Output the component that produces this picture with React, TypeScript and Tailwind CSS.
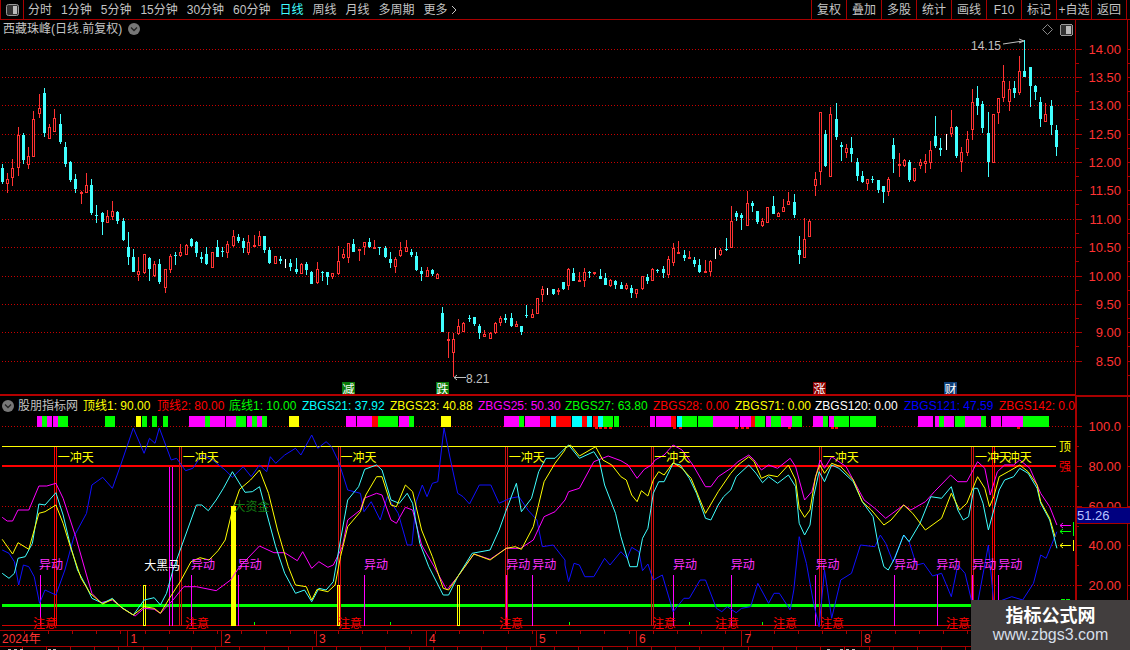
import React from 'react';

const RED = '#ff3232';
const LINE = '#a80000';
const GRID = '#c80000';
const CYAN = '#40ffff';

// hi, body top, body bottom, lo, kind (page pixels)
type Candle = [number, number, number, number, 'r' | 'c' | 'w'];
const candles: Candle[] = [
  [164,168,182,184,'c'],[173,179,184,193,'r'],[159,168,178,186,'r'],[127,135,168,176,'r'],[133,135,160,164,'c'],[147,156,165,169,'r'],
  [111,119,157,157,'r'],[94,108,114,118,'r'],[88,93,133,137,'c'],[124,127,139,139,'r'],[109,118,132,132,'r'],[114,124,142,144,'c'],
  [142,147,164,167,'c'],[161,162,180,182,'c'],[174,179,189,193,'c'],[191,192,193,204,'r'],[173,185,193,193,'r'],[179,185,213,215,'c'],
  [205,215,216,223,'c'],[212,213,222,235,'c'],[210,216,223,223,'r'],[201,211,217,220,'r'],[211,212,221,224,'c'],[218,221,240,241,'c'],
  [232,247,257,265,'c'],[249,257,272,272,'c'],[257,271,275,281,'r'],[254,254,273,274,'r'],[257,258,269,281,'c'],[261,264,276,277,'r'],
  [259,264,282,284,'c'],[269,269,288,293,'r'],[254,256,270,273,'r'],[252,255,256,265,'c'],[244,252,256,257,'r'],[244,245,255,255,'r'],
  [238,239,246,247,'c'],[241,242,253,257,'c'],[252,257,259,263,'c'],[247,254,264,265,'c'],[252,252,268,268,'r'],[240,247,257,257,'c'],
  [247,251,252,257,'c'],[241,244,253,258,'r'],[230,236,246,247,'r'],[234,237,241,243,'c'],[238,241,248,253,'c'],[235,242,253,255,'r'],
  [235,245,247,247,'r'],[231,236,246,246,'r'],[236,236,250,253,'c'],[247,250,263,264,'c'],[256,256,264,264,'r'],[256,259,261,264,'c'],
  [259,261,261,268,'w'],[259,263,267,271,'c'],[258,269,272,274,'c'],[263,264,274,274,'r'],[262,264,270,275,'c'],[271,272,284,284,'c'],
  [262,269,283,284,'r'],[271,272,273,281,'c'],[272,272,277,285,'c'],[273,273,277,279,'r'],[246,261,274,275,'r'],[249,254,258,259,'r'],
  [243,243,258,263,'r'],[239,244,252,252,'c'],[249,249,250,261,'r'],[242,242,247,255,'r'],[238,242,247,248,'c'],[240,247,248,248,'r'],
  [247,247,248,255,'c'],[246,248,257,258,'c'],[252,259,263,268,'c'],[257,259,267,273,'r'],[242,250,256,257,'r'],[240,247,252,252,'r'],
  [249,252,255,257,'c'],[252,256,270,271,'c'],[267,271,274,281,'c'],[267,270,277,277,'r'],[269,270,274,276,'c'],[273,274,279,279,'r'],
  [307,313,332,332,'c'],[332,339,341,358,'r'],[333,339,353,377,'r'],[319,326,334,335,'r'],[322,323,332,332,'r'],[315,318,319,322,'c'],
  [317,317,324,326,'c'],[324,326,333,339,'c'],[330,334,337,337,'r'],[332,333,339,339,'r'],[322,323,333,334,'r'],[316,318,323,326,'r'],
  [314,318,320,323,'c'],[313,318,326,327,'c'],[321,324,327,327,'r'],[326,326,332,335,'c'],[305,315,316,318,'c'],[309,314,318,318,'r'],
  [298,298,314,314,'r'],[286,289,295,302,'r'],[288,291,291,295,'w'],[289,289,294,295,'c'],[288,290,291,295,'r'],[282,282,289,290,'c'],
  [268,269,286,290,'r'],[268,273,281,281,'c'],[272,280,282,282,'r'],[268,272,281,287,'r'],[271,272,273,278,'c'],[272,272,273,275,'r'],
  [269,276,279,279,'c'],[273,278,285,285,'c'],[279,280,286,287,'r'],[280,281,285,289,'c'],[282,285,289,289,'c'],[283,285,289,290,'r'],
  [285,288,293,298,'c'],[289,289,294,298,'r'],[276,276,289,290,'r'],[274,277,281,284,'c'],[268,269,281,281,'r'],[269,270,271,273,'c'],
  [266,269,273,278,'c'],[256,259,275,278,'r'],[243,248,263,266,'r'],[241,252,253,253,'r'],[250,255,258,261,'c'],[251,257,258,258,'r'],
  [257,260,264,267,'c'],[259,265,272,273,'c'],[260,271,273,273,'r'],[260,261,272,276,'r'],[248,250,250,259,'w'],[248,250,255,256,'r'],
  [238,249,250,251,'c'],[206,221,248,248,'r'],[211,213,217,221,'c'],[213,215,218,230,'c'],[191,203,226,226,'r'],[201,203,206,212,'c'],
  [211,211,222,224,'c'],[218,221,226,227,'r'],[207,207,223,223,'r'],[196,206,214,214,'c'],[212,213,217,217,'r'],[199,207,212,212,'r'],
  [192,201,205,205,'r'],[194,202,215,218,'c'],[236,250,255,264,'c'],[218,239,258,258,'r'],[219,221,237,237,'r'],[172,179,186,196,'r'],
  [112,112,172,185,'r'],[130,134,166,167,'c'],[107,114,177,177,'r'],[103,119,137,140,'c'],[142,145,147,161,'c'],[144,148,153,158,'r'],
  [137,148,154,162,'c'],[158,162,176,181,'c'],[171,176,182,183,'c'],[179,179,184,190,'r'],[176,179,180,183,'c'],[180,180,190,193,'c'],
  [186,186,192,203,'c'],[177,179,192,196,'r'],[138,145,159,173,'c'],[153,164,166,177,'r'],[159,160,166,167,'r'],[160,162,180,182,'c'],
  [168,168,181,182,'r'],[159,162,166,169,'r'],[154,161,164,173,'r'],[141,150,163,169,'r'],[116,136,146,148,'c'],[138,148,150,156,'c'],
  [134,143,143,150,'w'],[110,127,134,137,'r'],[126,127,156,158,'c'],[147,152,162,172,'r'],[131,139,153,156,'r'],[89,102,130,140,'r'],
  [86,98,106,115,'c'],[101,104,128,133,'c'],[112,133,162,177,'c'],[114,114,163,163,'r'],[98,98,113,124,'r'],[65,81,98,102,'r'],
  [81,89,102,111,'r'],[81,88,93,98,'c'],[56,71,93,95,'r'],[40,71,77,77,'c'],[67,67,86,107,'c'],[85,86,92,100,'c'],
  [97,102,119,127,'c'],[103,114,122,122,'r'],[100,106,125,135,'c'],[125,130,147,156,'c'],
];

const blue = [
  6,360,25,370,40,395,52,465,65,405,80,410,95,440,110,520,125,480,155,495,180,420,205,320,240,250,255,165,285,142,312,175,335,105,370,-6,400,70,415,25,430,40,442,-6,475,90,490,85,515,122,535,115,560,75,590,90,625,120,645,142,675,110,697,140,720,105,740,125,750,80,765,100,790,75,820,55,835,75,865,15,882,55,905,35,920,50,940,95,965,180,1000,190,1010,245,1030,215,1055,270,1075,200,1105,250,1130,345,1143,345,1155,215,1172,165,1185,200,1200,160,1215,155,1232,-6,1250,90,1270,190,1285,200,1303,222,1330,165,1362,165,1385,220,1415,205,1440,200,1465,240,1490,270,1505,350,1535,345,1568,390,
];
const blueR = [
  0,405,10,455,25,400,40,405,55,440,80,440,110,385,125,405,155,365,172,385,185,352,205,365,215,422,230,402,245,450,270,435,300,545,330,505,345,505,375,450,390,450,420,535,435,545,450,530,475,548,490,535,515,530,535,460,565,520,580,490,595,490,625,540,635,480,650,320,670,400,690,520,705,590,720,420,740,565,765,450,795,430,820,345,860,350,875,315,890,340,910,395,940,315,955,335,975,405,995,400,1020,438,1045,430,1072,500,1090,405,1110,430,1130,520,1145,520,1175,345,1190,520,1240,500,1270,510,1300,460,1320,375,1335,385,1365,305,
];
const cyan = [
  6,430,25,445,40,430,50,385,70,380,90,340,108,222,125,225,155,188,175,255,195,345,215,420,240,470,255,505,285,520,312,505,335,530,370,555,400,510,428,503,445,525,462,490,480,420,510,330,545,225,560,225,578,242,600,210,620,175,645,125,680,187,700,185,720,170,745,270,765,350,790,430,820,490,845,480,865,515,885,475,905,480,925,455,945,330,965,210,995,170,1012,118,1045,105,1060,120,1085,210,1108,220,1130,190,1145,220,1165,340,1190,410,1230,495,1245,495,1270,440,1310,370,1360,360,1385,300,1405,240,1433,160,1447,245,1475,205,1495,125,1515,85,1540,85,1568,55,
];
const cyanR = [
  0,55,10,45,40,85,80,65,95,90,110,165,140,250,155,320,180,410,200,410,215,325,230,295,245,190,260,155,275,155,300,100,320,105,345,145,365,190,390,265,405,270,425,225,440,200,460,180,475,140,510,105,530,130,548,158,565,140,590,160,620,135,640,170,650,280,665,315,680,285,690,200,705,125,720,155,740,105,760,115,800,155,825,215,855,260,870,350,885,410,897,420,915,385,940,315,955,335,985,280,1015,200,1045,205,1072,170,1090,240,1105,270,1120,260,1135,175,1145,175,1160,220,1175,300,1190,240,1205,180,1220,150,1245,140,1262,115,1285,130,1310,175,1320,220,1345,270,1365,355,
];
const yellow = [
  6,328,35,372,50,338,80,358,108,250,125,245,155,225,175,280,195,350,225,445,250,490,285,522,312,508,340,535,370,555,400,530,428,535,445,550,470,505,500,455,530,395,555,383,580,390,605,362,625,330,645,240,665,178,695,150,720,120,745,190,770,300,800,410,820,465,850,470,865,510,880,478,910,485,930,465,945,380,965,290,1000,245,1015,195,1045,140,1060,140,1085,225,1100,230,1125,165,1145,185,1170,300,1200,380,1230,475,1245,480,1270,440,1315,372,1360,390,1405,355,1430,350,1447,358,1480,290,1510,155,1540,100,1568,60,
];
const yellowR = [
  0,55,15,45,40,78,85,50,105,90,130,105,155,140,170,150,185,195,200,215,212,182,230,198,245,150,260,125,275,135,300,98,325,115,350,145,390,250,425,185,460,130,480,105,510,80,525,95,545,145,565,135,590,140,620,105,640,150,650,235,665,262,680,240,695,140,707,105,720,130,740,100,765,110,800,150,825,215,850,240,885,285,905,270,940,225,965,250,1000,300,1045,265,1072,190,1095,240,1115,220,1145,140,1165,175,1178,230,1190,200,1205,140,1230,125,1262,105,1285,125,1310,165,1320,215,1345,265,1360,320,
];
const magenta = [
  6,262,20,273,35,273,50,240,80,240,108,168,130,168,155,160,175,205,210,320,240,435,255,490,280,518,312,510,340,535,375,558,400,535,428,538,445,550,480,510,510,470,545,470,600,482,640,450,665,410,720,348,760,368,790,368,825,392,840,365,865,415,885,395,910,412,925,405,950,350,965,270,1000,240,1010,205,1045,190,1060,195,1085,270,1100,280,1125,232,1145,240,1170,345,1205,410,1240,480,1270,440,1315,372,1360,388,1405,355,1445,355,1480,330,1510,260,1540,245,1568,210,
];
const magentaR = [
  0,210,10,185,40,175,80,95,120,78,155,92,175,105,200,145,220,118,240,105,250,90,275,75,300,45,325,60,355,105,390,170,405,170,425,140,460,115,480,95,510,75,525,90,545,120,565,105,590,115,625,85,640,110,665,210,685,185,708,90,720,115,740,80,780,110,805,160,830,210,860,235,890,265,940,225,960,240,1000,215,1025,185,1070,135,1090,155,1115,155,1145,95,1165,115,1180,195,1200,125,1220,105,1245,105,1262,90,1290,115,1320,190,1345,230,1365,285,
];

// zoom coordinates of the lower panel -> page pixels
const zx = (x: number) => x / 2.775;
const zr = (x: number) => 565 + x / 2.775;
const zy = (y: number) => 430 + y / 3;

function linePts(left: number[], right: number[]) {
  const out: string[] = [];
  for (let i = 0; i < left.length; i += 2) out.push(`${zx(left[i]).toFixed(1)},${zy(left[i + 1]).toFixed(1)}`);
  for (let i = 0; i < right.length; i += 2) out.push(`${zr(right[i]).toFixed(1)},${zy(right[i + 1]).toFixed(1)}`);
  return out.join(' ');
}

const M = '#ff00ff';
const G = '#00ff00';
const Y = '#ffff00';
const R = '#ff0000';
const C = '#00ffff';

// signal strip: start, end, colour (zoom coordinates)
const stripL: [number, number, string][] = [
  [104,118,M],[118,132,G],[132,146,M],[148,162,M],[162,190,G],[294,322,G],[381,395,Y],[398,412,G],[426,440,G],[456,470,G],
  [529,573,M],[574,588,G],[588,630,M],[633,662,M],[662,690,G],[692,706,M],[706,720,G],[720,734,M],[734,748,G],[809,837,Y],
  [969,997,M],[1000,1042,M],[1042,1057,R],[1058,1115,G],[1117,1145,M],[1145,1159,G],[1235,1263,Y],[1411,1453,M],[1453,1468,G],
  [1470,1512,M],[1512,1540,R],[1543,1557,C],[1557,1568,R],
];
const stripR: [number, number, string][] = [
  [0,30,R],[33,61,C],[61,74,R],[74,88,C],[91,105,R],[105,118,C],[118,146,G],[148,162,G],[248,262,M],[264,306,M],[306,320,R],
  [322,336,C],[336,378,G],[380,422,G],[422,436,M],[436,492,M],[495,524,M],[524,537,R],[537,565,G],[567,580,M],[580,608,G],
  [608,623,M],[624,638,M],[638,666,G],[696,723,M],[723,737,G],[740,753,M],[753,795,G],[798,854,G],[856,870,G],[985,1027,M],
  [1030,1043,M],[1043,1056,G],[1056,1084,M],[1087,1115,G],[1115,1157,M],[1158,1172,G],[1186,1213,M],[1216,1272,M],[1272,1330,G],[1332,1345,G],
];
const stripTicks = [95,108,122,135,310,326,482,498,512,628,745,756,1258];

const chong = [zx(160), zx(507), zx(945), zx(1412), zr(248), zr(715), zr(1138), zr(1195)];
// the first and the last pair are drawn brighter than the others
const redBars: [number, string][] = [
  [55, R], [zx(500), '#d01010'], [zx(940), '#d01010'], [zx(1405), '#d01010'],
  [zr(242), '#d01010'], [zr(709), '#d01010'], [972, '#d01010'], [993, R],
];
const yidong = [zx(108), zx(530), zx(660), zx(1010), zx(1405), zx(1477), zr(300), zr(460), zr(695), zr(913), zr(1030), zr(1130), zr(1202)];
const yidongBars: [number, number][] = [
  [zx(110), 575], [zx(468), 467], [zx(478), 467], [zx(531), 575], [zx(661), 575], [zx(1011), 575], [zx(1405), 575], [zx(1477), 575],
  [zr(300), 575], [zr(462), 575], [zr(695), 575], [zr(914), 575], [zr(1031), 575], [zr(1130), 575], [zr(1202), 575],
];
const zhuyi = [33, 185, 338, 499, 652, 715, 773, 820, 946];
const hollow = [zx(398), zx(936), zx(1269)];
const greenTicks = [zx(706), zx(1083), zr(10), zr(345), zr(548)];

const priceTicks = [
  ['14.00', 49.5], ['13.50', 77.5], ['13.00', 105.5], ['12.50', 134.5], ['12.00', 162.5], ['11.50', 190.5],
  ['11.00', 219.5], ['10.50', 247.5], ['10.00', 276.5], ['9.50', 304.5], ['9.00', 332.5], ['8.50', 361.5],
] as const;
const indTicks = [['100.0', 426.5], ['80.00', 466.5], ['60.00', 506.5], ['40.00', 545.5], ['20.00', 585.5]] as const;

const months = [
  ['1', 127.5], ['2', 221], ['3', 316], ['4', 426], ['5', 536], ['6', 636], ['7', 741.5], ['8', 861],
] as const;

const leftTabs = ['分时', '1分钟', '5分钟', '15分钟', '30分钟', '60分钟', '日线', '周线', '月线', '多周期'];
const rightTabs = ['复权', '叠加', '多股', '统计', '画线', 'F10', '标记', '+自选', '返回'];

const legend = [
  { t: '顶线1: 90.00', cls: 'w-[74px] text-[#ffff00]' },
  { t: '顶线2: 80.00', cls: 'w-[72px] text-[#ff0000]' },
  { t: '底线1: 10.00', cls: 'w-[73px] text-[#00ff00]' },
  { t: 'ZBGS21: 37.92', cls: 'w-[88px] text-[#00ffff]' },
  { t: 'ZBGS23: 40.88', cls: 'w-[88px] text-[#ffff00]' },
  { t: 'ZBGS25: 50.30', cls: 'w-[87px] text-[#ff00ff]' },
  { t: 'ZBGS27: 63.80', cls: 'w-[88px] text-[#00ff00]' },
  { t: 'ZBGS28: 0.00', cls: 'w-[82px] text-[#ff0000]' },
  { t: 'ZBGS71: 0.00', cls: 'w-[80px] text-[#ffff00]' },
  { t: 'ZBGS120: 0.00', cls: 'w-[89px] text-[#ffffff]' },
  { t: 'ZBGS121: 47.59', cls: 'w-[95px] text-[#0000ff]' },
  { t: 'ZBGS142: 0.0', cls: 'w-[76px] text-[#ff0000]' },
];

function Toggle() {
  return (
    <svg width="13" height="12" viewBox="0 0 13 12">
      <rect x="0.5" y="0.5" width="12" height="11" rx="2" fill="#333" stroke="#999" />
      <rect x="7" y="2" width="4" height="8" fill="#bbb" />
    </svg>
  );
}

function RoundChevron() {
  return (
    <svg width="12" height="12" viewBox="0 0 12 12">
      <circle cx="6" cy="6" r="6" fill="#777" />
      <path d="M3 4.5 L6 7.5 L9 4.5" fill="none" stroke="#222" strokeWidth="1.3" />
    </svg>
  );
}

function PriceChart() {
  return (
    <svg className="block absolute left-0 top-0" width="1075" height="376" viewBox="0 20 1075 376" shapeRendering="crispEdges">
      {priceTicks.map(([, y]) => (
        <line key={y} x1="2" x2="1075" y1={y} y2={y} stroke={GRID} strokeDasharray="1 2" />
      ))}
      {candles.map((c, i) => {
        const [hi, top, bot, lo, kind] = c;
        const cx = Math.floor(2.5 + i * 5.243) + 0.5;
        if (kind === 'w') {
          return (
            <g key={i}>
              <line x1={cx} x2={cx} y1={hi} y2={lo} stroke="#fff" />
              <line x1={cx - 1} x2={cx} y1={top + 0.5} y2={top + 0.5} stroke="#fff" />
            </g>
          );
        }
        const color = kind === 'r' ? RED : CYAN;
        return (
          <g key={i}>
            <line x1={cx} x2={cx} y1={hi} y2={top} stroke={color} />
            <line x1={cx} x2={cx} y1={bot} y2={lo} stroke={color} />
            {kind === 'r' ? (
              <rect x={cx - 1} y={top + 0.5} width="2" height={Math.max(bot - top - 1, 1)} fill="#000" stroke={color} />
            ) : (
              <rect x={cx - 1.5} y={top} width="3" height={Math.max(bot - top, 1)} fill={color} />
            )}
          </g>
        );
      })}
      <text x="971" y="50" fontSize="12" fill="#c0c0c0">14.15</text>
      <path d="M1003 44 L1023 41 M1019 39 L1024 41 L1019 43" fill="none" stroke="#c0c0c0" shapeRendering="auto" />
      <path d="M454 377.5 L466 377.5 M457 375 L454 377.5 L457 380" fill="none" stroke="#c0c0c0" shapeRendering="auto" />
      <text x="466" y="383" fontSize="12" fill="#c0c0c0">8.21</text>
      <path d="M1047.5 24.5 L1052.5 29.5 L1047.5 34.5 L1042.5 29.5 Z" fill="none" stroke="#888" shapeRendering="auto" />
      <g transform="translate(1060 24)">
        <rect x="0.5" y="0.5" width="12" height="11" rx="2" fill="#333" stroke="#999" />
        <rect x="6" y="2" width="5" height="8" fill="#bbb" />
      </g>
      {[
        [342, '减', '#0a7a0a'],
        [436, '跌', '#0a7a0a'],
        [813, '涨', '#8a0000'],
        [944, '财', '#0e3f78'],
      ].map(([x, t, bg]) => (
        <g key={t as string}>
          <rect x={x as number} y="382" width="13" height="14" fill={bg as string} />
          <text x={(x as number) + 0.5} y="393.5" fontSize="12" fill="#fff">{t}</text>
        </g>
      ))}
    </svg>
  );
}

function IndicatorChart() {
  return (
    <svg className="block absolute left-0 top-0" width="1075" height="234" viewBox="0 396 1075 234">
      <g shapeRendering="crispEdges">
        {[426.5, 506.5, 545.5, 585.5].map((y) => (
          <line key={y} x1="2" x2="1075" y1={y} y2={y} stroke={GRID} strokeDasharray="1 2" />
        ))}
        {stripL.map(([a, b, c], i) => (
          <rect key={i} x={Math.round(a / 2.8)} y="416" width={Math.round(b / 2.8) - Math.round(a / 2.8)} height="11" fill={c} />
        ))}
        {stripR.map(([a, b, c], i) => (
          <rect key={i} x={560 + Math.round(a / 2.75)} y="416" width={Math.round(b / 2.75) - Math.round(a / 2.75)} height="11" fill={c} />
        ))}
        {stripTicks.map((a) => (
          <rect key={a} x={560 + Math.round(a / 2.75)} y="427" width="3" height="2" fill={R} />
        ))}
        <line x1="2" x2="1056" y1="446.5" y2="446.5" stroke={Y} />
        <rect x="2" y="465" width="1054" height="2" fill={R} />
        <rect x="2" y="604" width="1060" height="3" fill={G} />
        <line x1="2" x2="1075" y1="625.5" y2="625.5" stroke="#d00000" />
        {redBars.map(([x, c]) => (
          <g key={x}>
            <line x1={Math.round(x) - 0.5} x2={Math.round(x) - 0.5} y1="447" y2="626" stroke={c} />
            <line x1={Math.round(x) + 1.5} x2={Math.round(x) + 1.5} y1="447" y2="626" stroke={c} />
          </g>
        ))}
        {yidongBars.map(([x, y], i) => (
          <line key={i} x1={Math.round(x) + 0.5} x2={Math.round(x) + 0.5} y1={y} y2="626" stroke={M} />
        ))}
        {hollow.map((x) => (
          <rect key={x} x={Math.round(x) + 0.5} y="585.5" width="2" height="40" fill="none" stroke={Y} />
        ))}
        <rect x="231" y="506" width="5" height="120" fill={Y} />
        {greenTicks.map((x) => (
          <rect key={x} x={Math.round(x)} y="622" width="1" height="3" fill={G} />
        ))}
      </g>
      <polyline points={linePts(blue, blueR)} fill="none" stroke="#1010ff" strokeWidth="1" />
      <polyline points={linePts(magenta, magentaR)} fill="none" stroke={M} strokeWidth="1" />
      <polyline points={linePts(cyan, cyanR)} fill="none" stroke={CYAN} strokeWidth="1" />
      <polyline points={linePts(yellow, yellowR)} fill="none" stroke={Y} strokeWidth="1" />

      {chong.map((x) => (
        <text key={x} x={x} y="462" fontSize="12" fill={Y}>一冲天</text>
      ))}
      {yidong.map((x) => (
        <text key={x} x={x} y="569" fontSize="12" fill="#ff30ff">异动</text>
      ))}
      {zhuyi.map((x) => (
        <text key={x} x={x} y="628" fontSize="12" fill={R}>注意</text>
      ))}
      <text x={zx(400)} y="570" fontSize="12" fill="#fff">大黑马</text>
      <text x={zx(648)} y="511" fontSize="12" fill="#127a12">大资金</text>
      <text x="1059" y="451" fontSize="12" fill={Y}>顶</text>
      <text x="1059" y="471" fontSize="12" fill={R}>强</text>
      <path d="M1060 525.5 H1071 M1063 523 L1060 525.5 L1063 528" fill="none" stroke={M} />
      <path d="M1060 531.5 H1071 M1063 529 L1060 531.5 L1063 534" fill="none" stroke={G} />
      <path d="M1060 545.5 H1071 M1063 543 L1060 545.5 L1063 548" fill="none" stroke={Y} />
      <path d="M1073.5 540 V551" stroke={Y} />
      <path d="M1073.5 522 V536" stroke={G} />
      <path d="M1061 599.5 H1065 M1066 599.5 H1070" stroke={G} />
    </svg>
  );
}

function TimeAxis() {
  return (
    <svg className="block" width="1075" height="20" viewBox="0 630 1075 20" shapeRendering="crispEdges">
      <line x1="0" x2="1075" y1="630.5" y2="630.5" stroke={LINE} />
      <line x1="0" x2="1075" y1="646.5" y2="646.5" stroke={LINE} />
      {Array.from({ length: 44 }, (_, i) => 24 + i * 24.2).map((x) => (
        <g key={x}>
          <line x1={x} x2={x} y1="631" y2="634" stroke={LINE} />
          <line x1={x - 2} x2={x - 2} y1="647" y2="650" stroke={LINE} />
        </g>
      ))}
      <text x="2" y="643" fontSize="12" fill={RED}>2024年</text>
      {months.map(([t, x]) => (
        <g key={t}>
          <line x1={x} x2={x} y1="630" y2="646" stroke={LINE} />
          <text x={x + 3} y="643" fontSize="12" fill={RED}>{t}</text>
        </g>
      ))}
      {[8, 14, 20, 48, 53, 827, 840, 846, 852].map((x) => (
        <rect key={x} x={x} y="649" width="3" height="1" fill="#bbb" />
      ))}
    </svg>
  );
}

function AxisColumn() {
  return (
    <svg className="block" width="55" height="630" viewBox="1075 20 55 630" shapeRendering="crispEdges">
      <line x1="1075.5" x2="1075.5" y1="20" y2="396" stroke={LINE} />
      <rect x="1075" y="396" width="2" height="254" fill={LINE} />
      <rect x="1075" y="395" width="55" height="2" fill={LINE} />
      <line x1="1127.5" x2="1127.5" y1="20" y2="650" stroke={LINE} />
      {priceTicks.map(([t, y], i) => (
        <g key={t}>
          <line x1="1076" x2="1082" y1={y} y2={y} stroke={LINE} />
          {i < priceTicks.length - 1 && <line x1="1076" x2="1079" y1={y + 14} y2={y + 14} stroke={LINE} />}
          <line x1="1128" x2="1130" y1={y} y2={y} stroke={LINE} />
          <line x1="1128" x2="1130" y1={y + 14} y2={y + 14} stroke={LINE} />
          <text x="1121" y={y + 4.5} fontSize="13" fill={RED} textAnchor="end" shapeRendering="auto">{t}</text>
        </g>
      ))}
      {indTicks.map(([t, y]) => (
        <g key={t}>
          <line x1="1076" x2="1082" y1={y} y2={y} stroke={LINE} />
          <line x1="1076" x2="1079" y1={y + 20} y2={y + 20} stroke={LINE} />
          <line x1="1128" x2="1130" y1={y} y2={y} stroke={LINE} />
          <text x="1121" y={y + 4.5} fontSize="13" fill={RED} textAnchor="end" shapeRendering="auto">{t}</text>
        </g>
      ))}
      <rect x="1076.5" y="507.5" width="54" height="16" fill="#000080" stroke={LINE} />
      <text x="1077" y="520" fontSize="13" fill="#b8c4ff" shapeRendering="auto">51.26</text>
      <line x1="1075" x2="1130" y1="630.5" y2="630.5" stroke={LINE} />
      <line x1="1075" x2="1130" y1="646.5" y2="646.5" stroke={LINE} />
    </svg>
  );
}

export default function App() {
  return (
    <div className="relative w-[1130px] h-[650px] overflow-hidden bg-black font-['Liberation_Sans','Noto_Sans_CJK_SC',sans-serif] text-[12px] leading-none text-[#c4c4c4]">
      <div className="flex h-[20px] items-center border-b border-[#a80000]">
        <div className="flex h-[19px] w-[24px] shrink-0 items-center justify-center border-x border-[#a80000]">
          <Toggle />
        </div>
        <div className="ml-[4px] flex items-center gap-[9px]">
          {leftTabs.map((t) => (
            <span key={t} className={t === '日线' ? 'text-[#40ffff]' : ''}>{t}</span>
          ))}
          <span className="flex items-center gap-[3px]">
            更多
            <svg width="6" height="10" viewBox="0 0 6 10">
              <path d="M1 1 L5 5 L1 9" fill="none" stroke="#c4c4c4" />
            </svg>
          </span>
        </div>
        <div className="ml-auto mr-[3px] flex h-[19px] border-r border-[#a80000]">
          {rightTabs.map((t) => (
            <div key={t} className="flex w-[35px] items-center justify-center border-l border-[#a80000]">{t}</div>
          ))}
        </div>
      </div>

      <div className="flex">
        <div className="w-[1075px] shrink-0">
          <div className="relative h-[376px]">
            <PriceChart />
            <div className="absolute left-[3px] top-[3px] flex items-center gap-[6px]">
              <span>西藏珠峰(日线.前复权)</span>
              <RoundChevron />
            </div>
          </div>
          <div className="relative h-[234px] border-t-2 border-[#b40000] box-content -mt-[2px]">
            <IndicatorChart />
            <div className="absolute left-[2px] top-[1px] flex h-[18px] items-center whitespace-nowrap">
              <RoundChevron />
              <span className="ml-[4px] w-[65px]">股朋指标网</span>
              {legend.map((l) => (
                <span key={l.t} className={l.cls}>{l.t}</span>
              ))}
            </div>
          </div>
          <TimeAxis />
        </div>
        <AxisColumn />
      </div>

      <div className="absolute bottom-0 right-0 flex h-[50px] w-[159px] flex-col items-center justify-center gap-[2px] bg-[#423e3e]">
        <span className="text-[18px] font-bold text-white">指标公式网</span>
        <span className="text-[16px] text-[#d6dee8]">www.zbgs3.com</span>
      </div>
    </div>
  );
}
